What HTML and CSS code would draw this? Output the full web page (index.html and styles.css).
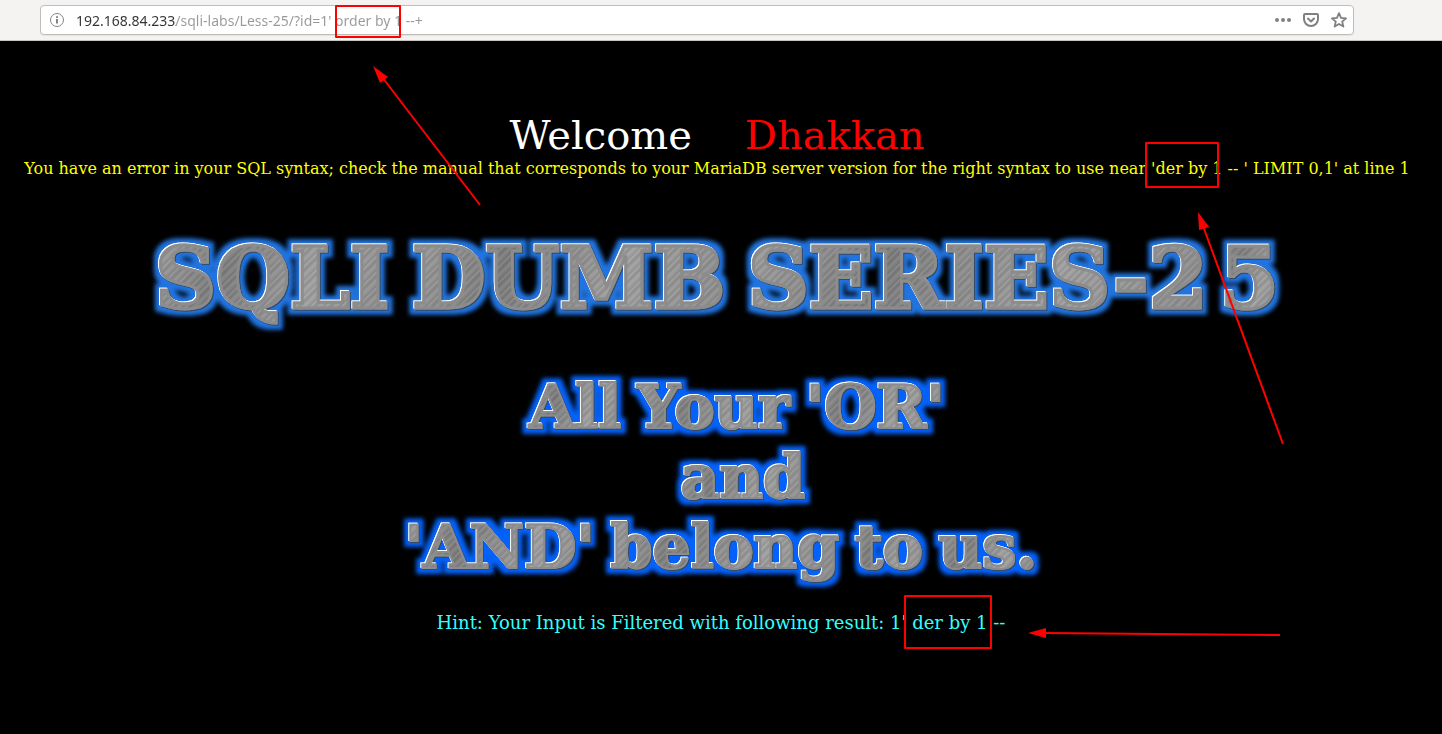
FILE: index.html
```html
<!DOCTYPE html>
<html lang="en">
<head>
<meta charset="utf-8">
<title>Less-25</title>
<link rel="stylesheet" href="styles.css">
</head>
<body>
<header class="toolbar">
  <form class="urlbar">
    <svg class="info" viewBox="0 0 16 16" aria-hidden="true"><circle cx="8" cy="8" r="6.5" fill="none" stroke="#858585"/><path d="M8 7v4.5M8 4.2v1.8" stroke="#777" stroke-width="1.8"/></svg>
    <input class="address" type="text" aria-label="Address" value="192.168.84.233/sqli-labs/Less-25/?id=1' order by 1 --+">
    <button class="tool" type="button" aria-label="Page actions"><svg viewBox="0 0 16 16" fill="#808080"><circle cx="2" cy="8" r="2"/><circle cx="8" cy="8" r="2"/><circle cx="14" cy="8" r="2"/></svg></button>
    <button class="tool" type="button" aria-label="Save to Pocket"><svg viewBox="0 0 16 16" fill="none" stroke="#808080" stroke-width="2" stroke-linejoin="round" stroke-linecap="round"><path d="M2 2h12a1 1 0 0 1 1 1v4a7 7 0 0 1-14 0V3a1 1 0 0 1 1-1z"/><path d="M5 6.5l3 3 3-3"/></svg></button>
    <button class="tool" type="button" aria-label="Bookmark this page"><svg viewBox="0 0 16 16" fill="none" stroke="#808080" stroke-width="1.8" stroke-linejoin="round"><path d="M8 1.2l2 4.7 5.1.4-3.9 3.3 1.2 5L8 11.9l-4.4 2.7 1.2-5L.9 6.3 6 5.9z"/></svg></button>
  </form>
</header>
<main class="page">
  <h1 class="welcome"><span>Welcome</span><span class="name">Dhakkan</span></h1>
  <p class="error">You have an error in your SQL syntax; check the manual that corresponds to your MariaDB server version for the right syntax to use near 'der by 1 -- ' LIMIT 0,1' at line 1</p>
  <h2 class="banner metal"><span>SQLI</span><span>DUMB</span><span>SERIES-2</span><span class="last">5</span></h2>
  <div class="slogan">
    <p class="line line-or metal"><span>All</span><span>Your</span><span>'OR'</span></p>
    <p class="line line-and metal"><span>and</span></p>
    <p class="line metal"><span>'AND'</span><span>belong</span><span>to</span><span>us.</span></p>
  </div>
  <p class="hint">Hint: Your Input is Filtered with following result: 1' der by 1 --</p>
</main>
<svg class="marks" width="1442" height="734" viewBox="0 0 1442 734" aria-hidden="true">
  <g fill="none" stroke="#f00" stroke-width="2" stroke-linejoin="round">
    <rect x="336" y="6" width="64" height="31"/>
    <rect x="1146" y="143" width="72" height="44"/>
    <rect x="905" y="596" width="86" height="52"/>
    <path d="M480 205L382 77M1283 444L1203 226M1280 635L1044 633"/>
  </g>
  <path fill="#f00" d="M373 66l15 11-8 6zM1198 212l11 15-10 3zM1028 633l18-5v10z"/>
</svg>
<svg class="defs" width="0" height="0" aria-hidden="true">
  <filter id="glow" x="-5%" y="-30%" width="110%" height="160%" color-interpolation-filters="sRGB">
    <feMorphology in="SourceAlpha" operator="dilate" radius="5" result="fat"/>
    <feGaussianBlur in="fat" stdDeviation="2" result="soft"/>
    <feFlood flood-color="#2174e0"/><feComposite in2="soft" operator="in" result="halo"/>
    <feOffset in="SourceAlpha" dx="-1" dy="-1" result="up"/>
    <feFlood flood-color="#fff"/><feComposite in2="up" operator="in" result="light"/>
    <feOffset in="SourceAlpha" dx="1" dy="1" result="down"/>
    <feFlood flood-color="#324b6b"/><feComposite in2="down" operator="in" result="dark"/>
    <feMerge><feMergeNode in="halo"/><feMergeNode in="dark"/><feMergeNode in="light"/><feMergeNode in="SourceGraphic"/></feMerge>
  </filter>
  <filter id="glow-bright" x="-5%" y="-30%" width="110%" height="160%" color-interpolation-filters="sRGB">
    <feMorphology in="SourceAlpha" operator="dilate" radius="5" result="fat"/>
    <feGaussianBlur in="fat" stdDeviation="2" result="soft"/>
    <feFlood flood-color="#0462fa"/><feComposite in2="soft" operator="in" result="halo"/>
    <feOffset in="SourceAlpha" dx="-1" dy="-1" result="up"/>
    <feFlood flood-color="#fff"/><feComposite in2="up" operator="in" result="light"/>
    <feOffset in="SourceAlpha" dx="1" dy="1" result="down"/>
    <feFlood flood-color="#324b6b"/><feComposite in2="down" operator="in" result="dark"/>
    <feMerge><feMergeNode in="halo"/><feMergeNode in="dark"/><feMergeNode in="light"/><feMergeNode in="SourceGraphic"/></feMerge>
  </filter>
</svg>
</body>
</html>
```
FILE: styles.css
```css
* { box-sizing: border-box; }
html, body { margin: 0; background: #000; }
body { position: relative; min-height: 100vh; font-family: "DejaVu Serif", serif; }
h1, h2, p { margin: 0; font-weight: 400; }

.toolbar { padding: 5px 88px 5px 40px; background: #f4f3f1; border-bottom: 1px solid #c8c5c1; }
.urlbar { display: flex; align-items: center; gap: 12px; height: 30px; margin: 0; padding: 0 6px 0 8px; background: #fff; border: 1px solid #c0bdb9; border-radius: 4px; box-shadow: 0 1px 1px #0001; }
.info { width: 16px; height: 16px; flex: none; }
.address { flex: 1; min-width: 0; margin-left: -1px; padding: 0; border: 0; outline: 0; font: 14px "Noto Sans", sans-serif; color: transparent; background: linear-gradient(90deg, #333 100px, #999 100px); -webkit-background-clip: text; background-clip: text; }
.tool { flex: none; width: 16px; height: 16px; padding: 0; border: 0; background: none; }
.tool svg { display: block; width: 16px; height: 16px; }

.page { display: flex; flex-direction: column; align-items: center; padding: 71px 8px 0; }
.welcome { display: flex; gap: 53px; margin-right: 8px; font-size: 40px; line-height: 46px; color: #fff; }
.name { color: #f00; }
.error { font-size: 16px; line-height: 22px; color: #ff0; white-space: nowrap; margin-right: 8px; }

.metal { display: flex; justify-content: center; font-weight: 700; white-space: nowrap; }
.metal span { color: transparent; -webkit-text-stroke: 3px #8c8c8c; background: repeating-linear-gradient(135deg, #ffffff14 0 1px, #00000014 3px 4px, #ffffff10 6px 7px, #00000010 10px 11px), linear-gradient(110deg, #a0a0a0, #7c7c7c 30%, #a0a0a0 65%, #8c8c8c); -webkit-background-clip: text; background-clip: text; }
.banner { gap: 22px; margin: 48px 8px 0 0; font-size: 85px; line-height: 100px; filter: url(#glow); }
.banner .last { margin-left: -10px; }
.slogan { display: flex; flex-direction: column; align-items: center; margin-top: 44px; }
.line { gap: 16px; font-size: 60px; line-height: 70px; filter: url(#glow-bright); }
.line-or { margin-left: 32px; }
.line-and { margin-left: 44px; }
.metal.line span { -webkit-text-stroke-width: 2px; }
.hint { margin-top: 30px; font-size: 18px; line-height: 22px; color: #3ff; }

.marks { position: absolute; top: 0; left: 0; pointer-events: none; }
.defs { position: absolute; }
```
